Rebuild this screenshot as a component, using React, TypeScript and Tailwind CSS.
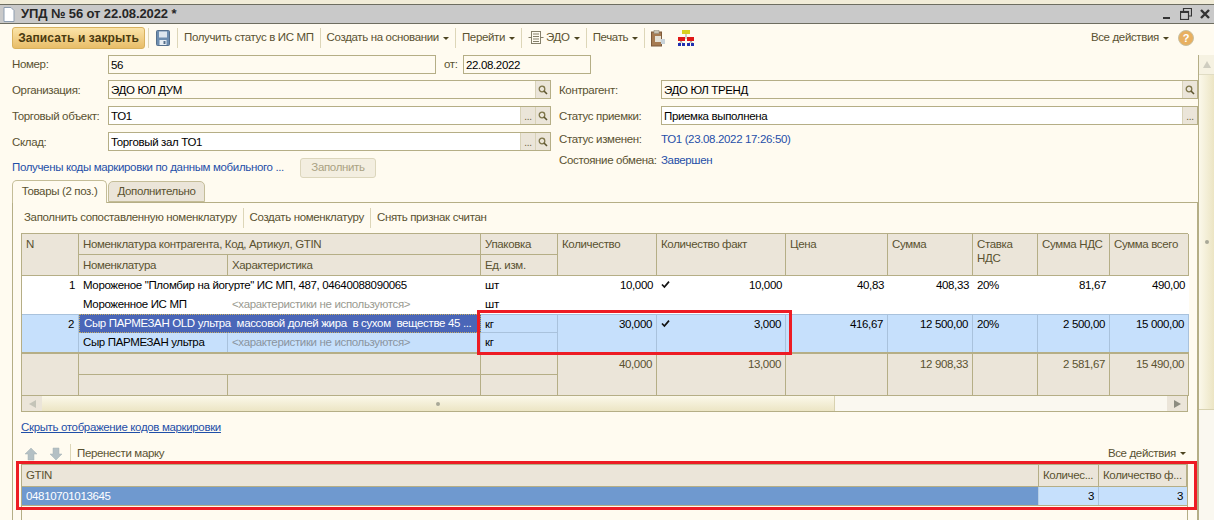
import { ReactNode } from "react";

const Caret = () => <span className="ml-[4px] inline-block h-0 w-0 border-x-[3px] border-t-[3px] border-x-transparent border-t-[#4d4420]" />;
const Sep = () => <div className="mx-[6px] h-[20px] w-px bg-[#ddd6b8]" />;

function SearchIcon() {
  return (
    <svg width="10" height="10" viewBox="0 0 10 10" fill="none">
      <circle cx="4" cy="4" r="2.8" stroke="#7d7448" strokeWidth="1.3" />
      <path d="M6 6 L9 9" stroke="#5d5530" strokeWidth="1.6" />
    </svg>
  );
}

function FieldButton({ kind }: { kind: "dots" | "search" }) {
  return (
    <div className="flex w-[15px] shrink-0 items-center justify-center border-l border-[#d8d2b8] bg-[#ebe5d9]">
      {kind === "search" ? <SearchIcon /> : <span className="mt-[3px] text-[10px] leading-none text-[#6b6340]">...</span>}
    </div>
  );
}

function Field({ value, className, buttons = [], white = false }: { value: string; className?: string; buttons?: ("dots" | "search")[]; white?: boolean }) {
  return (
    <div className={`flex h-[19px] border border-[#b5ae86] text-black ${white ? "bg-white" : "bg-[#fffbf0]"} ${className ?? ""}`}>
      <div className="flex-1 truncate pl-[2px] leading-[18px]">{value}</div>
      {buttons.map((b, i) => <FieldButton key={i} kind={b} />)}
    </div>
  );
}

function Cell({ children, className }: { children?: ReactNode; className?: string }) {
  return <div className={`overflow-hidden whitespace-nowrap px-[4px] ${className ?? ""}`}>{children}</div>;
}

const head = "border-r border-b border-[#b5ae86] bg-[#ebe5d9] text-[#5a5230] leading-[20px]";
const foot = "border-r border-b border-[#b5ae86] bg-[#ebe5d9] text-[#5a5230] leading-[20px] text-right";
const white = "bg-white text-black leading-[18px]";
const blue = "bg-[#c6e0fc] text-black leading-[18px] border-r border-[#a9c2dc]";

function Tick() {
  return (
    <svg width="9" height="9" viewBox="0 0 9 9" className="shrink-0">
      <path d="M1 4.5 L3.4 7 L8 1.6" fill="none" stroke="#111" strokeWidth="1.7" />
    </svg>
  );
}

function FactCell({ value, className }: { value: string; className: string }) {
  return (
    <Cell className={`row-span-2 flex items-start justify-between ${className}`}>
      <span className="mt-[4px]"><Tick /></span>
      <span>{value}</span>
    </Cell>
  );
}

function ArrowIcon({ up }: { up?: boolean }) {
  return (
    <svg width="14" height="14" viewBox="0 0 14 14" className={up ? "" : "rotate-180"}>
      <path d="M7 1 L13 7 H10 V13 H4 V7 H1 Z" fill="#b4c0c4" stroke="#a5b2b6" strokeWidth="0.5" />
    </svg>
  );
}

export default function App() {
  return (
    <div className="relative flex h-[520px] w-[1214px] flex-col overflow-hidden bg-[#fffbf0] font-['Liberation_Sans',sans-serif] text-[11.5px] tracking-[-0.35px] text-[#5a5230]">
      <div className="h-[4px] bg-[#f1ecd8]" />
      <div className="flex h-[20px] items-center border-y border-[#6d6d60] bg-[#c9c9c9] pl-[3px] pr-[3px]">
        <svg width="12" height="15" viewBox="0 0 12 15">
          <path d="M1 .5 H8 L11 3.5 V14.5 H1 Z" fill="#fff" stroke="#8d9db0" />
        </svg>
        <span className="ml-[6px] text-[13px] font-bold tracking-[-0.1px] text-[#262626]">УПД № 56 от 22.08.2022 *</span>
        <div className="ml-auto flex items-center gap-[7px]">
          <svg width="12" height="12" viewBox="0 0 12 12"><path d="M2 10 H9" stroke="#333" strokeWidth="2" /></svg>
          <svg width="12" height="12" viewBox="0 0 12 12" fill="none" stroke="#333"><path d="M3.5 3.5 V.5 H11.5 V8 H8.5" strokeWidth="1.2" /><rect x=".5" y="3.5" width="8" height="8" strokeWidth="1.2" /><path d="M.5 4 H8.5" strokeWidth="2" /></svg>
          <svg width="12" height="12" viewBox="0 0 12 12"><path d="M2 2 L10 10 M10 2 L2 10" stroke="#333" strokeWidth="2.4" /></svg>
        </div>
      </div>

      <div className="flex h-[31px] items-center pb-[3px] pl-[12px] pr-[20px]">
        <button className="h-[22px] w-[133px] rounded-[3px] border border-[#d9b25e] bg-gradient-to-b from-[#fbe4a8] to-[#e8bd68] text-[12px] font-bold tracking-[0.1px] text-[#4a3a10]">Записать и закрыть</button>
        <div className="ml-[3px] mr-[6px] h-[20px] w-px bg-[#ddd6b8]" />
        <svg width="14" height="16" viewBox="0 0 14 16" className="mx-[1px]">
          <rect x=".5" y=".5" width="13" height="15" rx="1" fill="#6e8eb0" stroke="#56708c" />
          <rect x="3" y="1.5" width="8" height="6" fill="#dde6ee" />
          <rect x="3.5" y="10" width="7" height="5" fill="#e8eef3" />
          <rect x="7.5" y="11" width="2" height="3" fill="#56708c" />
        </svg>
        <Sep />
        <span>Получить статус в ИС МП</span>
        <Sep />
        <span>Создать на основании</span><Caret />
        <Sep />
        <span>Перейти</span><Caret />
        <Sep />
        <svg width="16" height="16" viewBox="0 0 16 16" fill="none" stroke="#85806a">
          <rect x="3.5" y="1.5" width="9" height="12" />
          <path d="M5 4 H11 M5 6.5 H11 M5 9 H11 M5 11.5 H11 M.5 7.5 H3 M13 7.5 H15.5" />
        </svg>
        <span className="ml-[2px]">ЭДО</span><Caret />
        <Sep />
        <span>Печать</span><Caret />
        <Sep />
        <svg width="15" height="17" viewBox="0 0 15 17">
          <rect x=".5" y="2" width="10" height="14" fill="#a67b52" stroke="#7d5a3a" />
          <rect x="3" y=".5" width="5" height="3" fill="#c9c4b4" stroke="#8b8676" strokeWidth=".5" />
          <rect x="4" y="6" width="6" height="6" fill="#e4e1d6" />
          <rect x="10" y="9" width="4" height="5" fill="#c8d2d8" />
        </svg>
        <svg width="16" height="17" viewBox="0 0 16 17" className="ml-[12px]">
          <rect x="4" y="0" width="8" height="4" fill="#d8d020" />
          <path d="M8 4 V7 M3 10 V8 H13 V10 M3 11 L1 14 M3 11 L5 14 M13 11 L11 14 M13 11 L15 14" stroke="#777" strokeWidth=".7" fill="none" />
          <rect x="0" y="7" width="7" height="4" fill="#e01818" />
          <rect x="9" y="7" width="7" height="4" fill="#e01818" />
          <rect x="0" y="13" width="3" height="3" fill="#2030b0" />
          <rect x="4" y="13" width="3" height="3" fill="#2030b0" />
          <rect x="9" y="13" width="3" height="3" fill="#2030b0" />
          <rect x="13" y="13" width="3" height="3" fill="#2030b0" />
        </svg>
        <div className="ml-auto flex items-center">
          <span>Все действия</span><Caret />
          <div className="ml-[9px] flex h-[16px] w-[16px] items-center justify-center rounded-full border border-[#c9c0a0] bg-[#e8b060] text-[11px] font-bold text-white">?</div>
        </div>
      </div>

      <div className="flex min-h-0 flex-1">
        <div className="min-w-0 flex-1">
          <div className="flex h-[25px] pl-[12px]">
            <span className="w-[96px] leading-[18px]">Номер:</span>
            <Field value="56" className="h-[18px] w-[328px]" />
            <span className="ml-[8px] w-[19px] leading-[18px]">от:</span>
            <Field value="22.08.2022" className="h-[18px] w-[128px]" />
          </div>

          <div className="flex h-[100px] pl-[12px]">
            <div className="flex w-[539px] shrink-0 flex-col gap-[6px]">
              <div className="flex"><span className="w-[96px] whitespace-nowrap leading-[20px]">Организация:</span><Field value="ЭДО ЮЛ ДУМ" className="flex-1" buttons={["search"]} /></div>
              <div className="flex"><span className="w-[96px] whitespace-nowrap leading-[20px]">Торговый объект:</span><Field value="ТО1" className="flex-1" white buttons={["dots", "search"]} /></div>
              <div className="flex"><span className="w-[96px] whitespace-nowrap leading-[20px]">Склад:</span><Field value="Торговый зал ТО1" className="flex-1" white buttons={["dots", "search"]} /></div>
              <div className="flex items-center">
                <span className="w-[288px] whitespace-nowrap text-[#1f4fa8]">Получены коды маркировки по данным мобильного ...</span>
                <button className="h-[20px] w-[76px] rounded-[3px] border border-[#dcd6bc] bg-[#f3eee0] text-[#aaa283]">Заполнить</button>
              </div>
            </div>
            <div className="ml-[8px] flex min-w-0 flex-1 flex-col gap-[6px]">
              <div className="flex"><span className="w-[102px] whitespace-nowrap leading-[20px]">Контрагент:</span><Field value="ЭДО ЮЛ ТРЕНД" className="flex-1" buttons={["search"]} /></div>
              <div className="flex"><span className="w-[102px] whitespace-nowrap leading-[20px]">Статус приемки:</span><Field value="Приемка выполнена" className="flex-1" white buttons={["dots"]} /></div>
              <div className="flex h-[15px] leading-[15px]"><span className="w-[102px] whitespace-nowrap">Статус изменен:</span><span className="text-[#1f4fa8]">ТО1 (23.08.2022 17:26:50)</span></div>
              <div className="flex h-[15px] leading-[15px]"><span className="w-[102px] whitespace-nowrap">Состояние обмена:</span><span className="text-[#1f4fa8]">Завершен</span></div>
            </div>
          </div>

          <div className="ml-[12px] flex h-[22px] items-end gap-[1px]">
            <div className="z-10 -mb-px flex h-[23px] w-[95px] items-center justify-center whitespace-nowrap rounded-t-[5px] border border-b-0 border-[#c4bd98] bg-[#fffbf0]">Товары (2 поз.)</div>
            <div className="flex h-[21px] w-[97px] items-center justify-center whitespace-nowrap rounded-t-[5px] border border-[#c4bd98] bg-[#ebe5d9]">Дополнительно</div>
          </div>

          <div className="ml-[12px] h-[320px] border border-[#b5ae86] pl-[8px] pr-[8px]">
            <div className="flex h-[30px] items-center pl-[3px]">
              <span>Заполнить сопоставленную номенклатуру</span>
              <Sep />
              <span>Создать номенклатуру</span>
              <Sep />
              <span>Снять признак считан</span>
            </div>

            <div className="w-[1167px] border-l border-t border-[#b5ae86]">
              <div className="grid grid-cols-[57px_149px_253px_77px_99px_129px_102px_85px_65px_72px_79px] grid-rows-[21px_21px_19px_19px_19px_19px_2px_21px_21px]">
                <Cell className={`${head} row-span-2`}>N</Cell>
                <Cell className={`${head} col-span-2`}>Номенклатура контрагента, Код, Артикул, GTIN</Cell>
                <Cell className={head}>Упаковка</Cell>
                <Cell className={`${head} row-span-2`}>Количество</Cell>
                <Cell className={`${head} row-span-2`}>Количество факт</Cell>
                <Cell className={`${head} row-span-2`}>Цена</Cell>
                <Cell className={`${head} row-span-2`}>Сумма</Cell>
                <Cell className={`${head} row-span-2 !leading-[14px] pt-[3px]`}>Ставка<br />НДС</Cell>
                <Cell className={`${head} row-span-2`}>Сумма НДС</Cell>
                <Cell className={`${head} row-span-2`}>Сумма всего</Cell>
                <Cell className={head}>Номенклатура</Cell>
                <Cell className={head}>Характеристика</Cell>
                <Cell className={head}>Ед. изм.</Cell>

                <Cell className={`${white} row-span-2 text-right`}>1</Cell>
                <Cell className={`${white} col-span-2`}>Мороженое "Пломбир на йогурте" ИС МП, 487, 04640088090065</Cell>
                <Cell className={white}>шт</Cell>
                <Cell className={`${white} row-span-2 text-right`}>10,000</Cell>
                <FactCell value="10,000" className={white} />
                <Cell className={`${white} row-span-2 text-right`}>40,83</Cell>
                <Cell className={`${white} row-span-2 text-right`}>408,33</Cell>
                <Cell className={`${white} row-span-2`}>20%</Cell>
                <Cell className={`${white} row-span-2 text-right`}>81,67</Cell>
                <Cell className={`${white} row-span-2 text-right`}>490,00</Cell>
                <Cell className={white}>Мороженное ИС МП</Cell>
                <Cell className={`${white} !text-[#9a9a90]`}>&lt;характеристики не используются&gt;</Cell>
                <Cell className={white}>шт</Cell>

                <Cell className={`${blue} row-span-2 border-t border-t-[#a9c2dc] text-right`}>2</Cell>
                <Cell className="col-span-2 whitespace-pre border border-dotted border-[#c9b060] bg-[#4a66b8] leading-[17px] text-white">Сыр ПАРМЕЗАН OLD ультра  массовой долей жира  в сухом  веществе 45 ...</Cell>
                <Cell className={`${blue} border-y border-y-[#a9c2dc]`}>кг</Cell>
                <Cell className={`${blue} row-span-2 border-t border-t-[#a9c2dc] text-right`}>30,000</Cell>
                <FactCell value="3,000" className={`${blue} border-t border-t-[#a9c2dc]`} />
                <Cell className={`${blue} row-span-2 border-t border-t-[#a9c2dc] text-right`}>416,67</Cell>
                <Cell className={`${blue} row-span-2 border-t border-t-[#a9c2dc] text-right`}>12 500,00</Cell>
                <Cell className={`${blue} row-span-2 border-t border-t-[#a9c2dc]`}>20%</Cell>
                <Cell className={`${blue} row-span-2 border-t border-t-[#a9c2dc] text-right`}>2 500,00</Cell>
                <Cell className={`${blue} row-span-2 border-t border-t-[#a9c2dc] text-right`}>15 000,00</Cell>
                <Cell className={blue}>Сыр ПАРМЕЗАН ультра</Cell>
                <Cell className={`${blue} !text-[#8a94a0]`}>&lt;характеристики не используются&gt;</Cell>
                <Cell className={blue}>кг</Cell>

                <div className="col-span-11 border-y border-[#b5ae86] bg-[#fffbf0]" />

                <Cell className={`${foot} row-span-2`} />
                <Cell className={`${foot} col-span-2`} />
                <Cell className={foot} />
                <Cell className={`${foot} row-span-2`}>40,000</Cell>
                <Cell className={`${foot} row-span-2`}>13,000</Cell>
                <Cell className={`${foot} row-span-2`} />
                <Cell className={`${foot} row-span-2`}>12 908,33</Cell>
                <Cell className={`${foot} row-span-2`} />
                <Cell className={`${foot} row-span-2`}>2 581,67</Cell>
                <Cell className={`${foot} row-span-2`}>15 490,00</Cell>
                <Cell className={foot} />
                <Cell className={foot} />
                <Cell className={foot} />
              </div>
              <div className="flex h-[16px] border-r border-b border-[#b5ae86] bg-[#faf8f0]">
                <div className="flex w-[20px] items-center justify-center bg-[#ebe5d9]">
                  <span className="h-0 w-0 border-y-[4px] border-r-[7px] border-y-transparent border-r-[#c4c4b8]" />
                </div>
                <div className="flex w-[793px] items-center justify-center border-r border-[#d8d2b0] bg-gradient-to-b from-[#fbf8ea] to-[#ece5c4]">
                  <span className="h-[4px] w-[4px] rounded-full bg-[#a8a898]" />
                </div>
                <div className="flex-1" />
                <div className="flex w-[20px] items-center justify-center bg-[#ebe5d9]">
                  <span className="h-0 w-0 border-y-[4px] border-l-[7px] border-y-transparent border-l-[#8c8c80]" />
                </div>
              </div>
            </div>

            <div className="h-[30px] pt-[7px] text-[#1f4fa8] underline">Скрыть отображение кодов маркировки</div>

            <div className="flex h-[23px] w-[1167px] items-center pl-[3px] pr-[2px]">
              <ArrowIcon up />
              <span className="w-[11px]" />
              <ArrowIcon />
              <span className="ml-[1px]"><Sep /></span>
              <span>Перенести марку</span>
              <span className="ml-auto">Все действия</span><Caret />
            </div>

            <div className="mt-[-1px] h-[60px] w-[1167px] border-x border-t border-[#b5ae86]">
              <div className="grid grid-cols-[1017px_60px_88px] grid-rows-[22px_18px]">
                <Cell className={head}>GTIN</Cell>
                <Cell className={head}>Количес...</Cell>
                <Cell className={head}>Количество ф...</Cell>
                <Cell className="border-r border-[#b8cfe6] bg-[#6f99cf] leading-[18px] text-white">04810701013645</Cell>
                <Cell className="border-r border-[#a9c2dc] bg-[#c6e0fc] text-right leading-[18px] text-black">3</Cell>
                <Cell className="bg-[#c6e0fc] text-right leading-[18px] text-black">3</Cell>
              </div>
              <div className="border-t border-[#b5ae86]" />
            </div>
          </div>
        </div>

        <div className="flex w-[16px] shrink-0 flex-col border-l border-[#b5ae86] bg-[#faf8f0]">
          <div className="flex h-[20px] items-center justify-center border-b border-[#e0dcc4] bg-[#f6f2e2]">
            <span className="h-0 w-0 border-x-[4px] border-b-[7px] border-x-transparent border-b-[#cfcdc0]" />
          </div>
          <div className="flex h-[335px] items-center justify-center border-b border-[#d8d2b0] bg-gradient-to-r from-[#fbf8ea] to-[#ece5c4]">
            <span className="h-[4px] w-[4px] rounded-full bg-[#a8a898]" />
          </div>
        </div>
      </div>

      <div className="pointer-events-none absolute left-[477px] top-[310px] h-[45px] w-[315px] border-[3px] border-[#ed1c24]" />
      <div className="pointer-events-none absolute left-[16px] top-[461px] h-[49px] w-[1181px] border-[3px] border-[#ed1c24]" />
    </div>
  );
}
